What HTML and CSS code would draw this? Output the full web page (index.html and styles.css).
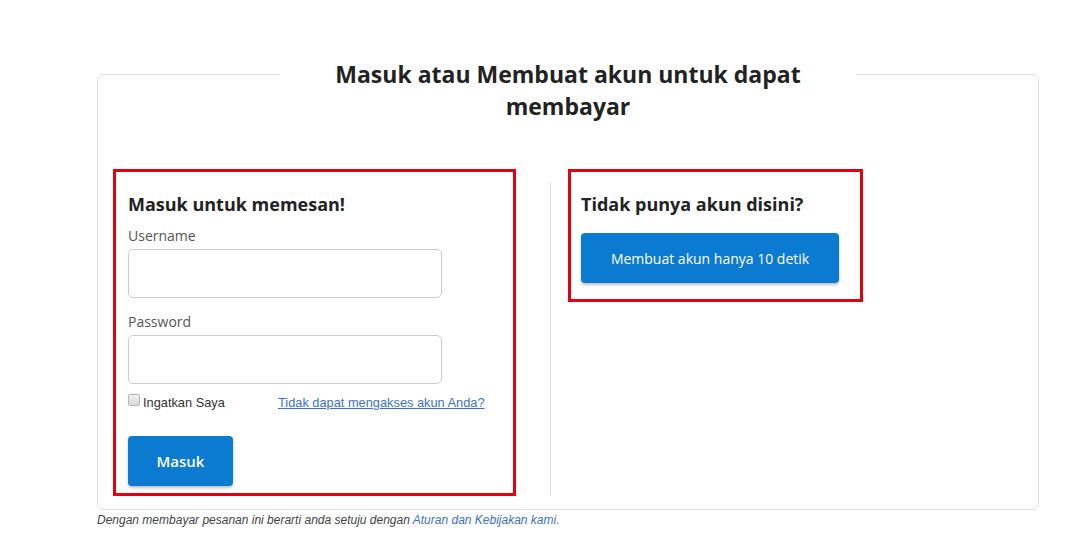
FILE: index.html
```html
<!DOCTYPE html>
<html>
<head>
<meta charset="utf-8">
<link rel="stylesheet" href="styles.css">
</head>
<body>
<div class="page">
  <section class="panel">
    <h1 class="panel-title">Masuk atau Membuat akun untuk dapat membayar</h1>
    <div class="cols">
      <form class="box box-login">
        <h2 class="box-head">Masuk untuk memesan!</h2>
        <label class="field-label">Username</label>
        <input class="field" type="text">
        <label class="field-label field-label-2">Password</label>
        <input class="field" type="password">
        <div class="opts">
          <label class="remember"><input class="check" type="checkbox"> Ingatkan Saya</label>
          <a class="forgot" href="#">Tidak dapat mengakses akun Anda?</a>
        </div>
        <button class="btn btn-login" type="button">Masuk</button>
      </form>
      <div class="divider"></div>
      <div class="box box-register">
        <h2 class="box-head">Tidak punya akun disini?</h2>
        <button class="btn btn-register" type="button">Membuat akun hanya 10 detik</button>
      </div>
    </div>
  </section>
  <p class="terms">Dengan membayar pesanan ini berarti anda setuju dengan <a href="#">Aturan dan Kebijakan kami.</a></p>
</div>
</body>
</html>
```
FILE: styles.css
```css
* { box-sizing: border-box; }
html, body { margin: 0; padding: 0; background: #fff; }
body { font-family: "Open Sans", "Liberation Sans", sans-serif; color: #222; }
.page { width: 942px; margin: 0 0 0 97px; padding-top: 74px; }
.panel {
  border: 1px solid #e1e1e1;
  border-radius: 6px;
  height: 436px;
  padding: 0 15px;
}
.panel-title {
  width: 576px;
  margin: -17px auto 0;
  background: #fff;
  text-align: center;
  font-size: 23px;
  line-height: 32px;
  font-weight: 700;
  color: #222;
  padding: 0 30px;
}
.cols { display: flex; align-items: flex-start; margin-top: 47px; }
.box { border: 3px solid #e3000f; }
.box-login { width: 403px; height: 327px; padding: 19px 12px 0; display: flex; flex-direction: column; align-items: flex-start; }
.box-register { width: 295px; padding: 19px 10px 16px; }
.divider { width: 1px; height: 314px; background: #e1e1e1; margin: 13px 17px 0 34px; }
.box-head { margin: 0; font-size: 18px; line-height: 26px; font-weight: 700; color: #222; }
.field-label { display: block; margin-top: 9px; font-size: 14px; line-height: 20px; color: #555; }
.field-label-2 { margin-top: 14px; }
.field {
  display: block;
  margin-top: 3px;
  width: 314px;
  height: 49px;
  border: 1px solid #ccc;
  border-radius: 5px;
  background: #fff;
}
.opts {
  display: grid;
  grid-template-columns: 150px auto;
  margin-top: 10px;
  font-family: "Liberation Sans", Arial, sans-serif;
  font-size: 12.8px;
  line-height: 18px;
}
.remember { color: #333; display: flex; align-items: center; }
.check {
  -webkit-appearance: none;
  appearance: none;
  margin: 0 3px 0 0;
  width: 12px;
  height: 12px;
  border: 1px solid #b5b5b5;
  border-radius: 2px;
  background: linear-gradient(#f0f0f0, #d8d8d8);
  position: relative;
  top: -3px;
}
.forgot { color: #3d6fc9; text-decoration: underline; }
.btn {
  border: 0;
  border-radius: 4px;
  background: #0b7ad1;
  color: #fff;
  font-family: "Open Sans", "Liberation Sans", sans-serif;
  box-shadow: 0 2px 3px rgba(0,0,0,0.25);
  cursor: pointer;
}
.btn-login { margin-top: 24px; width: 105px; height: 50px; font-size: 15px; font-weight: 600; }
.btn-register { display: block; margin-top: 16px; width: 258px; height: 50px; font-size: 14px; }
.terms {
  margin: 2px 0 0;
  font-family: "Liberation Sans", Arial, sans-serif;
  font-style: italic;
  font-size: 12px;
  line-height: 16px;
  color: #444;
}
.terms a { color: #3d6fc9; text-decoration: none; }
```
